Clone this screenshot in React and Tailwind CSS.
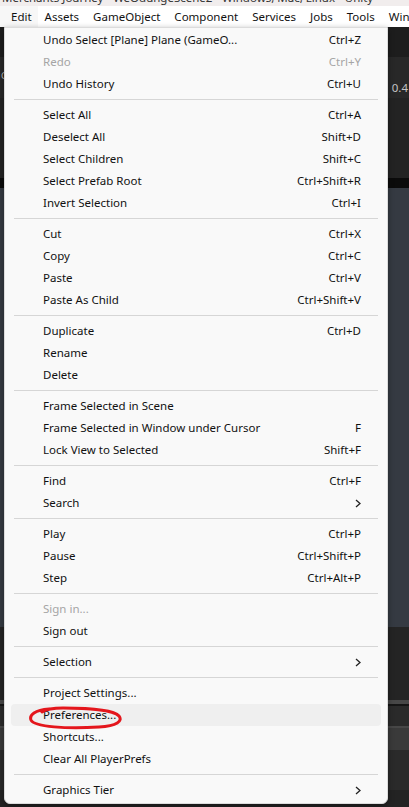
import React from "react";

const F = { fontFamily: '"Noto Sans", "Liberation Sans", sans-serif' };

const groups = [
  [
    ["Undo Select [Plane] Plane (GameO...", "Ctrl+Z"],
    ["Redo", "Ctrl+Y", "dis"],
    ["Undo History", "Ctrl+U"],
  ],
  [
    ["Select All", "Ctrl+A"],
    ["Deselect All", "Shift+D"],
    ["Select Children", "Shift+C"],
    ["Select Prefab Root", "Ctrl+Shift+R"],
    ["Invert Selection", "Ctrl+I"],
  ],
  [
    ["Cut", "Ctrl+X"],
    ["Copy", "Ctrl+C"],
    ["Paste", "Ctrl+V"],
    ["Paste As Child", "Ctrl+Shift+V"],
  ],
  [
    ["Duplicate", "Ctrl+D"],
    ["Rename", ""],
    ["Delete", ""],
  ],
  [
    ["Frame Selected in Scene", ""],
    ["Frame Selected in Window under Cursor", "F"],
    ["Lock View to Selected", "Shift+F"],
  ],
  [
    ["Find", "Ctrl+F"],
    ["Search", "", "sub"],
  ],
  [
    ["Play", "Ctrl+P"],
    ["Pause", "Ctrl+Shift+P"],
    ["Step", "Ctrl+Alt+P"],
  ],
  [
    ["Sign in...", "", "dis"],
    ["Sign out", ""],
  ],
  [["Selection", "", "sub"]],
  [
    ["Project Settings...", ""],
    ["Preferences...", "", "hover"],
    ["Shortcuts...", ""],
    ["Clear All PlayerPrefs", ""],
  ],
  [["Graphics Tier", "", "sub"]],
];

function Chevron() {
  return (
    <svg width="6" height="9" viewBox="0 0 6 9" className="shrink-0">
      <polyline points="1,1 5,4.5 1,8" fill="none" stroke="#222" strokeWidth="1.3" />
    </svg>
  );
}

function Row({ item }) {
  const [label, sc, kind] = item;
  const dis = kind === "dis";
  const sub = kind === "sub";
  const hover = kind === "hover";
  return (
    <div
      className={
        "relative flex h-[22px] items-center justify-between text-[11.5px] " +
        (hover ? "mx-[6px] rounded-[4px] bg-[#efefef] pl-[32px] pr-[20px] " : "pl-[38px] pr-[26px] ") +
        (sub ? "pr-[16px] " : "") +
        (dis ? "text-[#a5a5a5]" : "text-[#111]")
      }
    >
      <span className="whitespace-nowrap">{label}</span>
      {sub ? <Chevron /> : <span className="whitespace-nowrap">{sc}</span>}
      {hover && (
        <svg
          className="pointer-events-none absolute left-[16px] top-[1px]"
          width="98"
          height="25"
          viewBox="0 0 98 25"
        >
          <path
            d="M22 4 C8 5 2 10 4 15 C7 22 40 24 72 22 C90 21 96 16 92 11 C87 5 60 3 36 3 C26 3 18 5 15 7"
            fill="none"
            stroke="#e4161c"
            strokeWidth="3"
            strokeLinecap="round"
          />
        </svg>
      )}
    </div>
  );
}

function Sep() {
  return (
    <div className="flex h-[9px] items-center px-[9px]">
      <div className="h-px w-full bg-[#d6d6d6]" />
    </div>
  );
}

export default function App() {
  return (
    <div className="relative h-[807px] w-[409px] overflow-hidden bg-[#232323]" style={F}>
      {/* title strip */}
      <div className="h-[6px] overflow-hidden bg-[#f1eded]">
        <div className="-mt-[10px] whitespace-nowrap pl-[2px] text-[11.5px] leading-[16px] text-[#333]">
          Merchants Journey - WeOdungeScene2 - Windows, Mac, Linux - Unity
        </div>
      </div>
      {/* menu bar */}
      <div className="flex h-[21px] items-center overflow-hidden bg-white text-[11.5px] text-[#111]">
        <span className="flex h-full items-center bg-[#f7f7f7] pl-[11px] pr-[6px]">Edit</span>
        <span className="ml-[7px]">Assets</span>
        <span className="ml-[14px]">GameObject</span>
        <span className="ml-[14px]">Component</span>
        <span className="ml-[14px]">Services</span>
        <span className="ml-[14px]">Jobs</span>
        <span className="ml-[14px]">Tools</span>
        <span className="ml-[14px] whitespace-nowrap">Wind</span>
      </div>
      {/* background editor */}
      <div className="flex flex-col">
        <div className="h-[30px] bg-[#1d1d1d]" />
        <div className="flex h-[41px] items-end justify-between bg-[#282828] pb-[2px] text-[11.5px] text-[#c4c4c4]">
          <span className="mb-[14px] pl-[1px] text-[9px]">G</span>
          <span className="pr-[1px]">0.4</span>
        </div>
        <div className="h-[80px] bg-[#232323]" />
        <div className="h-[10px] bg-[#0b0b0b]" />
        <div className="h-[439px] bg-[#353a42]" />
        <div className="h-[73px] bg-[#242424]" />
        <div className="h-[4px] bg-[#474747]" />
        <div className="h-[2px] bg-[#151515]" />
        <div className="h-[20px] bg-[#2a2a2a]" />
        <div className="h-[2px] bg-[#474747]" />
        <div className="h-[22px] bg-[#3a3a3a]" />
        <div className="h-[40px] bg-[#2a2a2a]" />
      </div>
      {/* dropdown menu */}
      <div className="absolute left-[4px] top-[27px] w-[384px] rounded-b-[6px] border border-[#dcdcdc] bg-[#f9f9f9] pb-[2px] pt-[1px] shadow-[0_2px_6px_rgba(0,0,0,0.35)]">
        {groups.map((g, i) => (
          <React.Fragment key={i}>
            {i > 0 && <Sep />}
            {g.map((it, j) => (
              <Row key={j} item={it} />
            ))}
          </React.Fragment>
        ))}
      </div>
    </div>
  );
}
